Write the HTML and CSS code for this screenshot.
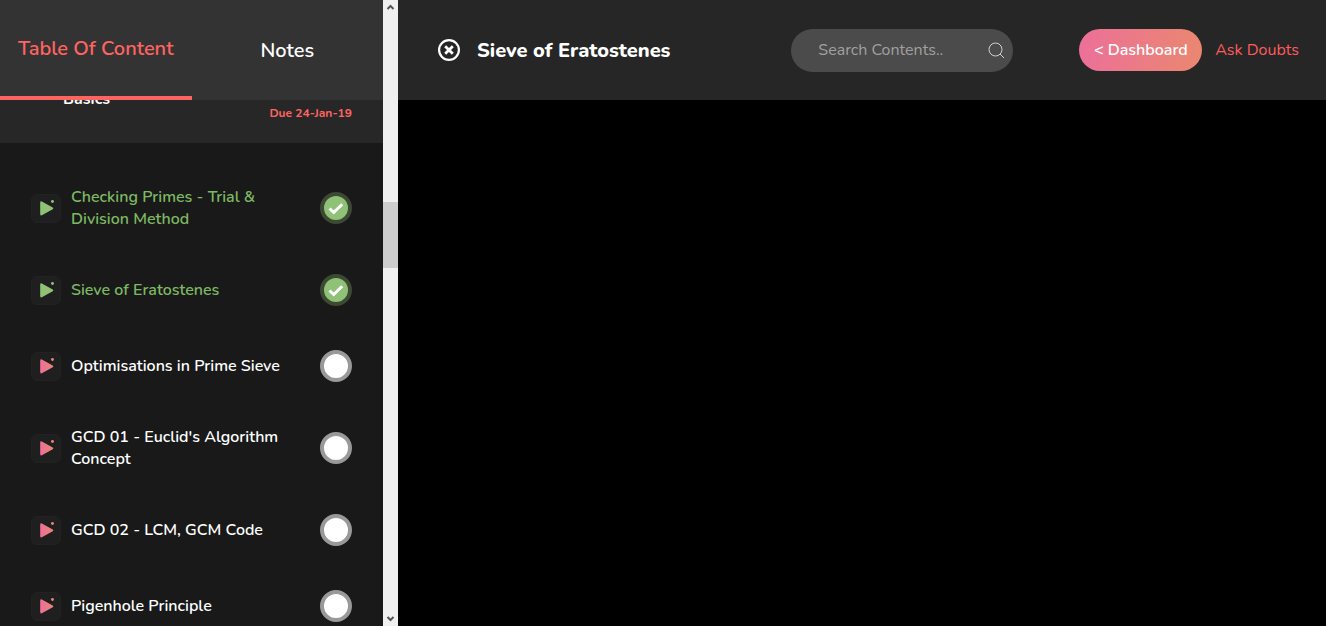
FILE: index.html
```html
<!DOCTYPE html>
<html lang="en">
<head>
<meta charset="utf-8">
<meta name="viewport" content="width=device-width, initial-scale=1">
<title>Sieve of Eratostenes</title>
<link rel="stylesheet" href="styles.css">
</head>
<body>
<svg class="defs" aria-hidden="true">
  <defs>
    <linearGradient id="pink" gradientUnits="userSpaceOnUse" x1="8" y1="0" x2="23" y2="0">
      <stop offset="0" stop-color="#ec7099"/><stop offset="1" stop-color="#ea8770"/>
    </linearGradient>
    <symbol id="play" viewBox="0 0 28 28">
      <path d="M8 8Q8 6 9.700 6.800L21 13Q22.300 13.900 21 14.800L9.700 20.900Q8 21.700 8 19.800Z"/>
      <circle cx="20.700" cy="6.700" r="1.500"/>
    </symbol>
    <symbol id="tick" viewBox="0 0 16 16">
      <path d="M1.500 8.500l4.200 4L14.200 4.200" fill="none" stroke="#fff" stroke-width="3"/>
    </symbol>
  </defs>
</svg>
<div class="app">
  <aside class="sidebar">
    <div class="panel">
      <nav class="tabs">
        <a class="tab active" href="#contents">Table Of Content</a>
        <a class="tab" href="#notes">Notes</a>
      </nav>
      <div class="scroller" id="contents">
        <header class="section">
          <span class="section-title">Basics</span>
          <span class="due">Due 24-Jan-19</span>
        </header>
        <ul class="lessons">
          <li class="lesson done"><svg class="play"><use href="#play"/></svg><a href="#l1">Checking Primes - Trial &amp; Division Method</a><span class="status"><svg><use href="#tick"/></svg></span></li>
          <li class="lesson done"><svg class="play"><use href="#play"/></svg><a href="#l2">Sieve of Eratostenes</a><span class="status"><svg><use href="#tick"/></svg></span></li>
          <li class="lesson"><svg class="play"><use href="#play"/></svg><a href="#l3">Optimisations in Prime Sieve</a><span class="status"></span></li>
          <li class="lesson"><svg class="play"><use href="#play"/></svg><a href="#l4">GCD 01 - Euclid's Algorithm Concept</a><span class="status"></span></li>
          <li class="lesson"><svg class="play"><use href="#play"/></svg><a href="#l5">GCD 02 - LCM, GCM Code</a><span class="status"></span></li>
          <li class="lesson"><svg class="play"><use href="#play"/></svg><a href="#l6">Pigenhole Principle</a><span class="status"></span></li>
        </ul>
      </div>
    </div>
    <div class="scrollbar" aria-hidden="true">
      <svg class="arrow" viewBox="0 0 15 15"><path d="M4.500 9L7.500 6l3 3"/></svg>
      <div class="before"></div>
      <div class="thumb"></div>
      <div class="after"></div>
      <svg class="arrow" viewBox="0 0 15 15"><path d="M4.500 6l3 3 3-3"/></svg>
    </div>
  </aside>
  <main class="main">
    <header class="topbar">
      <button class="close" type="button" aria-label="Close">
        <svg viewBox="0 0 22 22"><circle cx="11" cy="11" r="9.900" stroke-width="2.200"/><path d="M7.200 7.200l7.600 7.600M14.800 7.200l-7.600 7.600" stroke-width="2.800"/></svg>
      </button>
      <h1 class="title">Sieve of Eratostenes</h1>
      <form class="search" role="search">
        <input type="text" placeholder="Search Contents.." aria-label="Search contents">
        <button type="button" aria-label="Search"><svg viewBox="0 0 17 17"><circle cx="7.500" cy="7.500" r="6.500"/><path d="M12 12l4 4"/></svg></button>
      </form>
      <a class="dashboard" href="#dashboard">&lt; Dashboard</a>
      <a class="doubts" href="#doubts">Ask Doubts</a>
    </header>
    <div class="player"></div>
  </main>
</div>
</body>
</html>
```
FILE: styles.css
```css
* { box-sizing: border-box; }
body { margin: 0; background: #000; color: #fff; font-family: Nunito, Lato, sans-serif; font-size: 16px; line-height: 22px; }
a { color: inherit; text-decoration: none; }
button { padding: 0; border: 0; background: none; color: inherit; }
svg { display: block; }
.defs { position: absolute; width: 0; height: 0; }
.app { display: flex; height: 100vh; overflow: hidden; }
.sidebar { display: flex; flex: 0 0 398px; min-height: 0; }
.panel { flex: 1; min-width: 0; display: flex; flex-direction: column; background: #191919; }
.tabs { display: flex; flex: none; height: 100px; background: #333; }
.tab { flex: 1; display: flex; align-items: center; justify-content: center; padding-top: 2px; font-size: 20px; font-weight: 600; }
.tab.active { color: #ff6461; border-bottom: 4px solid #ff6461; }
.scroller { flex: 1; min-height: 0; overflow: hidden; }
.section { display: flex; justify-content: space-between; margin-top: -24px; padding: 12px 31px 19px 63px; background: #272727; }
.section-title { font-weight: 700; }
.due { align-self: flex-end; padding-top: 14px; color: #ff6461; font-size: 12px; font-weight: 700; }
.lessons { margin: 0; padding: 21px 31px; list-style: none; }
.lesson { display: flex; align-items: center; gap: 10px; padding: 22px 0; font-weight: 600; }
.lesson a { flex: 1; padding-right: 20px; }
.play { flex: none; width: 30px; height: 29px; border: 1px solid #222; border-radius: 6px; background: #1f1f1f; fill: url(#pink); }
.done { color: #7db862; }
.done .play { fill: #8fc177; }
.status { flex: none; display: grid; place-items: center; width: 32px; height: 32px; border: 4px solid #999; border-radius: 50%; background: #fff; }
.status svg { width: 16px; height: 16px; }
.done .status { border-color: #3c4a34; background: #8fc177; }
.scrollbar { flex: none; width: 15px; display: flex; flex-direction: column; background: #f0f0f0; }
.arrow { width: 15px; height: 15px; fill: none; stroke: #555; stroke-width: 2; }
.before { flex: 187; }
.thumb { height: 66px; background: #cdcdcd; }
.after { flex: 343; }
.main { flex: 1; min-width: 0; display: flex; flex-direction: column; }
.topbar { display: flex; align-items: center; height: 100px; padding: 0 27px 0 40px; background: #262626; }
.close svg { width: 22px; height: 22px; fill: none; stroke: #fff; }
.title { flex: 1; margin: 0 0 0 17px; padding-top: 2px; font-size: 20px; line-height: 28px; font-weight: 800; }
.search { display: flex; align-items: center; width: 222px; height: 43px; margin-right: 66px; padding: 0 8px 0 27px; border-radius: 22px; background: #4b4b4b; }
.search input { flex: 1; min-width: 0; padding: 0; border: 0; outline: 0; background: none; color: #fff; font: inherit; }
.search input::placeholder { color: #a0a0a0; opacity: 1; }
.search svg { width: 17px; height: 17px; fill: none; stroke: #d0d0d0; }
.dashboard { display: flex; align-items: center; justify-content: center; width: 123px; height: 42px; margin-right: 13px; border-radius: 21px; background: linear-gradient(to right, #ec7099, #ea8770); font-weight: 600; }
.doubts { color: #ff5c5c; }
.player { flex: 1; background: #000; }
```
